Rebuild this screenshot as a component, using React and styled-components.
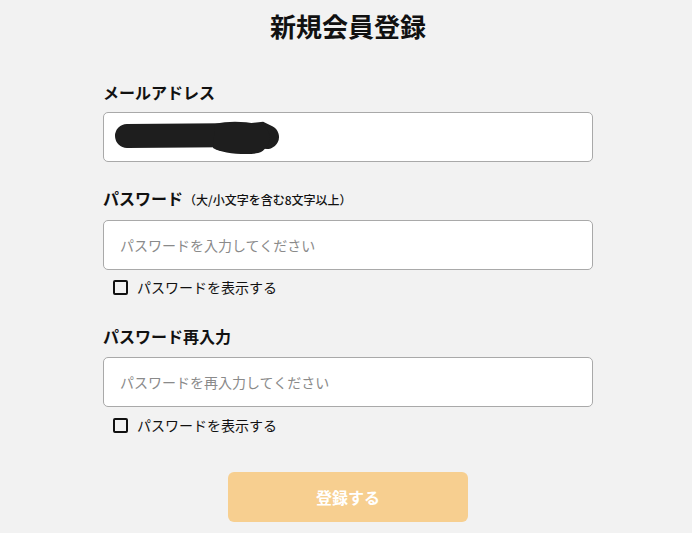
import React, { useState } from "react";
import styled, { createGlobalStyle } from "styled-components";

const GlobalStyle = createGlobalStyle`
  html, body {
    margin: 0;
    padding: 0;
    background: #f2f2f2;
  }
  body {
    font-family: "Noto Sans CJK JP", "Noto Sans", sans-serif;
    color: #111;
  }
`;

const Page = styled.div`
  padding: 9px 0 0 4px;
`;

const Title = styled.h1`
  margin: 0;
  text-align: center;
  font-size: 26px;
  line-height: 34px;
  font-weight: 700;
  color: #111;
`;

const Form = styled.form`
  width: 490px;
  margin: 37px auto 0;
  display: flex;
  flex-direction: column;
`;

const Field = styled.div`
  display: flex;
  flex-direction: column;
  margin-top: ${(p) => p.$top || 0}px;
`;

const Label = styled.label`
  font-size: 16px;
  line-height: 24px;
  font-weight: 700;
  margin-bottom: ${(p) => p.$gap || 8}px;
`;

const Note = styled.span`
  font-size: 12px;
  font-weight: 500;
  margin-left: 1px;
`;

const InputWrap = styled.div`
  position: relative;
`;

const Input = styled.input`
  box-sizing: border-box;
  width: 100%;
  height: 50px;
  border: 1px solid #a9a9a9;
  border-radius: 5px;
  background: #fff;
  padding: 0 16px;
  font-family: inherit;
  font-size: 14px;
  color: #222;
  outline: none;
  &::placeholder {
    color: #8a8a8a;
  }
`;

const Redaction = styled.svg`
  position: absolute;
  left: 0;
  top: 0;
  pointer-events: none;
`;

const CheckRow = styled.label`
  display: flex;
  align-items: center;
  gap: 9px;
  margin: ${(p) => p.$top || 7}px 0 0 10px;
  height: 20px;
  font-size: 14px;
  cursor: pointer;
`;

const HiddenCheck = styled.input`
  display: none;
`;

const Box = styled.span`
  box-sizing: border-box;
  width: 15px;
  height: 15px;
  border: 2px solid #111;
  border-radius: 2px;
  background: ${(p) => (p.$on ? "#111" : "transparent")};
`;

const Submit = styled.button`
  align-self: center;
  margin-top: 37px;
  width: 240px;
  height: 50px;
  border: none;
  border-radius: 6px;
  background: #f7cf90;
  color: #fff;
  font-family: inherit;
  font-size: 16px;
  font-weight: 700;
`;

const Toggle = ({ checked, onChange, top }) => (
  <CheckRow $top={top}>
    <HiddenCheck type="checkbox" checked={checked} onChange={onChange} />
    <Box $on={checked} />
    パスワードを表示する
  </CheckRow>
);

const App = () => {
  const [show1, setShow1] = useState(false);
  const [show2, setShow2] = useState(false);

  return (
    <Page>
      <GlobalStyle />
      <Title>新規会員登録</Title>
      <Form onSubmit={(e) => e.preventDefault()}>
        <Field>
          <Label htmlFor="email">メールアドレス</Label>
          <InputWrap>
            <Input id="email" type="email" />
            <Redaction width="200" height="50" viewBox="0 0 200 50">
              <path
                d="M24 24 L150 23 L158 22 L164 25"
                stroke="#1e1e1e"
                strokeWidth="24"
                strokeLinecap="round"
                fill="none"
              />
              <path
                d="M112 12 C128 8 150 10 160 14 C170 20 168 34 158 40 C150 44 118 42 110 36 Z"
                fill="#1e1e1e"
              />
            </Redaction>
          </InputWrap>
        </Field>

        <Field $top={24}>
          <Label htmlFor="pw">
            パスワード<Note>（大/小文字を含む8文字以上）</Note>
          </Label>
          <Input
            id="pw"
            type={show1 ? "text" : "password"}
            placeholder="パスワードを入力してください"
          />
          <Toggle checked={show1} onChange={() => setShow1(!show1)} />
        </Field>

        <Field $top={27}>
          <Label htmlFor="pw2" $gap={9}>
            パスワード再入力
          </Label>
          <Input
            id="pw2"
            type={show2 ? "text" : "password"}
            placeholder="パスワードを再入力してください"
          />
          <Toggle top={8} checked={show2} onChange={() => setShow2(!show2)} />
        </Field>

        <Submit type="submit" disabled>
          登録する
        </Submit>
      </Form>
    </Page>
  );
};

export default App;
